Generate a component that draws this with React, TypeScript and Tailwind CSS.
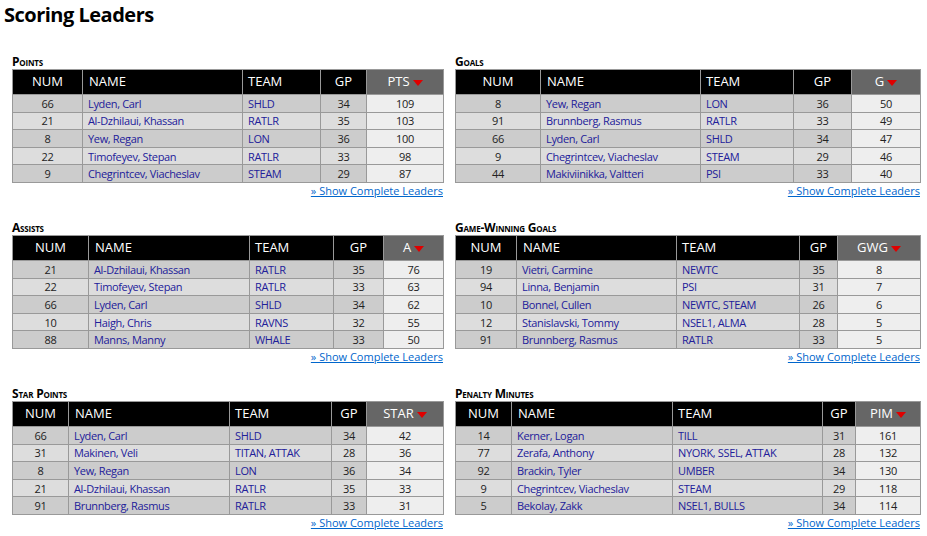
import React from 'react';

type Row = [string, string, string, string, string];

type Board = {
  title: string;
  stat: string;
  widths: number[];
  rows: Row[];
};

const boards: Board[] = [
  {
    title: 'Points',
    stat: 'PTS',
    widths: [70, 160, 78, 46, 77],
    rows: [
      ['66', 'Lyden, Carl', 'SHLD', '34', '109'],
      ['21', 'Al-Dzhilaui, Khassan', 'RATLR', '35', '103'],
      ['8', 'Yew, Regan', 'LON', '36', '100'],
      ['22', 'Timofeyev, Stepan', 'RATLR', '33', '98'],
      ['9', 'Chegrintcev, Viacheslav', 'STEAM', '29', '87'],
    ],
  },
  {
    title: 'Goals',
    stat: 'G',
    widths: [85, 160, 93, 58, 69],
    rows: [
      ['8', 'Yew, Regan', 'LON', '36', '50'],
      ['91', 'Brunnberg, Rasmus', 'RATLR', '33', '49'],
      ['66', 'Lyden, Carl', 'SHLD', '34', '47'],
      ['9', 'Chegrintcev, Viacheslav', 'STEAM', '29', '46'],
      ['44', 'Makiviinikka, Valtteri', 'PSI', '33', '40'],
    ],
  },
  {
    title: 'Assists',
    stat: 'A',
    widths: [76, 161, 84, 50, 60],
    rows: [
      ['21', 'Al-Dzhilaui, Khassan', 'RATLR', '35', '76'],
      ['22', 'Timofeyev, Stepan', 'RATLR', '33', '63'],
      ['66', 'Lyden, Carl', 'SHLD', '34', '62'],
      ['10', 'Haigh, Chris', 'RAVNS', '32', '55'],
      ['88', 'Manns, Manny', 'WHALE', '33', '50'],
    ],
  },
  {
    title: 'Game-Winning Goals',
    stat: 'GWG',
    widths: [61, 160, 123, 38, 83],
    rows: [
      ['19', 'Vietri, Carmine', 'NEWTC', '35', '8'],
      ['94', 'Linna, Benjamin', 'PSI', '31', '7'],
      ['10', 'Bonnel, Cullen', 'NEWTC, STEAM', '26', '6'],
      ['12', 'Stanislavski, Tommy', 'NSEL1, ALMA', '28', '5'],
      ['91', 'Brunnberg, Rasmus', 'RATLR', '33', '5'],
    ],
  },
  {
    title: 'Star Points',
    stat: 'STAR',
    widths: [56, 161, 102, 35, 77],
    rows: [
      ['66', 'Lyden, Carl', 'SHLD', '34', '42'],
      ['31', 'Makinen, Veli', 'TITAN, ATTAK', '28', '36'],
      ['8', 'Yew, Regan', 'LON', '36', '34'],
      ['21', 'Al-Dzhilaui, Khassan', 'RATLR', '35', '33'],
      ['91', 'Brunnberg, Rasmus', 'RATLR', '33', '31'],
    ],
  },
  {
    title: 'Penalty Minutes',
    stat: 'PIM',
    widths: [56, 161, 150, 33, 65],
    rows: [
      ['14', 'Kerner, Logan', 'TILL', '31', '161'],
      ['77', 'Zerafa, Anthony', 'NYORK, SSEL, ATTAK', '28', '132'],
      ['92', 'Brackin, Tyler', 'UMBER', '34', '130'],
      ['9', 'Chegrintcev, Viacheslav', 'STEAM', '29', '118'],
      ['5', 'Bekolay, Zakk', 'NSEL1, BULLS', '34', '114'],
    ],
  },
];

function SortArrow() {
  return (
    <svg width="10" height="6" viewBox="0 0 10 6" className="ml-[3px] inline-block align-middle">
      <polygon points="0,0 10,0 5,6" fill="#e00000" />
    </svg>
  );
}

function LeaderTable({ board }: { board: Board }) {
  return (
    <div className="mb-[23px]">
      <h3 className="text-[12px] font-bold leading-[14px] tracking-[-0.2px] text-black [font-variant:small-caps]">
        {board.title}
      </h3>
      <table className="w-full table-fixed border-collapse border border-[#999]">
        <colgroup>
          {board.widths.map((w, i) => (
            <col key={i} style={{ width: w }} />
          ))}
        </colgroup>
        <thead>
          <tr className="h-[25px] text-[13px] font-normal text-white">
            <th className="border border-[#999] bg-black text-center font-normal">NUM</th>
            <th className="border border-[#999] bg-black pl-[6px] text-left font-normal">NAME</th>
            <th className="border border-[#999] bg-black pl-[5px] text-left font-normal">TEAM</th>
            <th className="border border-[#999] bg-black text-center font-normal">GP</th>
            <th className="border border-[#999] bg-[#666] text-center font-normal">
              {board.stat}
              <SortArrow />
            </th>
          </tr>
        </thead>
        <tbody>
          {board.rows.map((r, i) => (
            <tr
              key={i}
              className={`h-[17.6px] text-[11px] leading-[15px] tracking-[-0.35px] ${i % 2 === 0 ? 'bg-[#ccc]' : 'bg-[#ddd]'}`}
            >
              <td className="border border-[#999] text-center text-[#222]">{r[0]}</td>
              <td className="truncate border border-[#999] pl-[5px] text-[#22209a]">{r[1]}</td>
              <td className="truncate border border-[#999] pl-[5px] text-[#22209a]">{r[2]}</td>
              <td className="border border-[#999] text-center text-[#222]">{r[3]}</td>
              <td className="border border-[#999] bg-[#eee] text-center text-[#222]">{r[4]}</td>
            </tr>
          ))}
        </tbody>
      </table>
      <div className="text-right text-[11px] leading-[15px]">
        <a href="#" className="text-[#0066cc] underline">
          » Show Complete Leaders
        </a>
      </div>
    </div>
  );
}

export default function App() {
  return (
    <div className="min-h-[536px] bg-white font-['Open_Sans',sans-serif]">
      <h1 className="pl-[4px] text-[20px] font-bold leading-[30px] tracking-[-0.5px] text-black">
        Scoring Leaders
      </h1>
      <div className="mt-[25px] grid grid-cols-[431px_465px] gap-x-[12px] pl-[12px]">
        {boards.map((b) => (
          <LeaderTable key={b.title} board={b} />
        ))}
      </div>
    </div>
  );
}
